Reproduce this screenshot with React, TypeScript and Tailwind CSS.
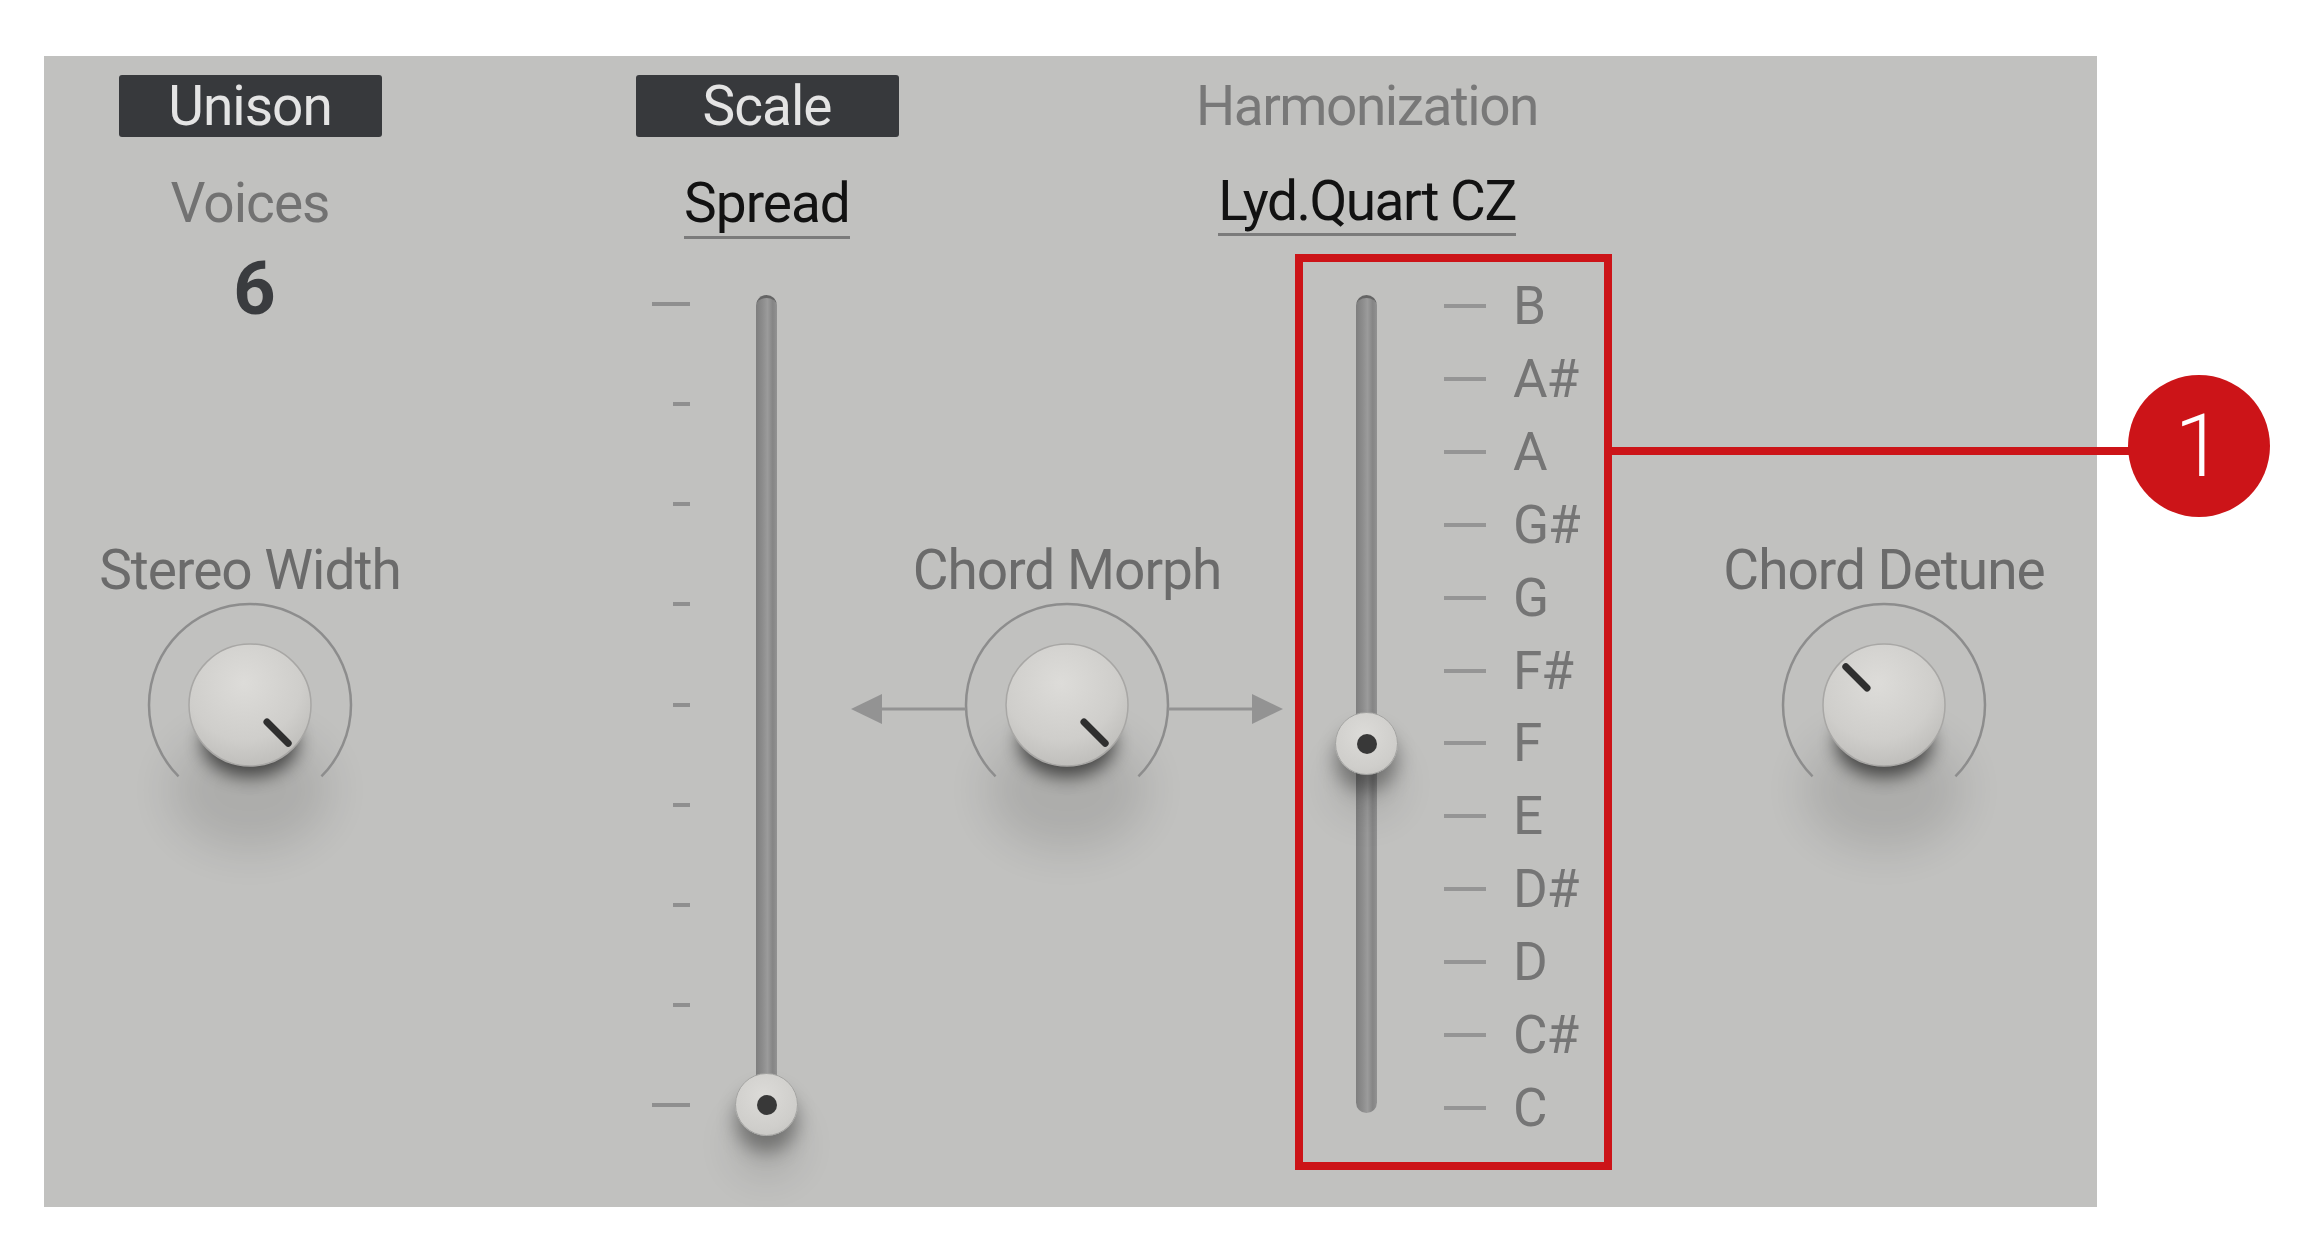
import React, { useId } from 'react';

const NOTES = ['B', 'A#', 'A', 'G#', 'G', 'F#', 'F', 'E', 'D#', 'D', 'C#', 'C'];
// long ticks only at the ends of the Spread scale
const SPREAD_TICKS = [true, false, false, false, false, false, false, false, true];

const Tab = ({ label }: { label: string }) => (
  <div className="flex h-[62px] w-[263px] items-center justify-center rounded-[3px] bg-[#37393c] text-[55px] leading-none tracking-[-1px] text-[#e4e4e4]">
    {label}
  </div>
);

const Label = ({ children, className = '' }: { children: React.ReactNode; className?: string }) => (
  <div className={`whitespace-nowrap text-[55px] leading-[60px] tracking-[-1px] text-[#6b6b6b] ${className}`}>
    {children}
  </div>
);

function Knob({ angle, arrows = false }: { angle: number; arrows?: boolean }) {
  const uid = useId().replace(/:/g, '');
  const w = arrows ? 440 : 220;
  const cx = w / 2;
  const cy = 105;
  const t = (angle * Math.PI) / 180;
  const pt = (r: number) => `${cx + r * Math.sin(t)} ${cy - r * Math.cos(t)}`;
  const a = 101 * Math.SQRT1_2;
  const ay = cy + 4;

  return (
    <svg width={w} height={210} viewBox={`0 0 ${w} 210`} className="shrink-0 overflow-visible">
      <defs>
        <radialGradient id={`body${uid}`} cx="45%" cy="32%" r="72%">
          <stop offset="0%" stopColor="#dddcd9" />
          <stop offset="65%" stopColor="#cfcecb" />
          <stop offset="100%" stopColor="#bdbcb9" />
        </radialGradient>
        <filter id={`near${uid}`} x="-100%" y="-100%" width="300%" height="300%">
          <feGaussianBlur stdDeviation="9" />
        </filter>
        <filter id={`far${uid}`} x="-100%" y="-100%" width="300%" height="300%">
          <feGaussianBlur stdDeviation="22" />
        </filter>
      </defs>

      <ellipse cx={cx} cy={cy + 85} rx={80} ry={60} fill="#000" opacity={0.1} filter={`url(#far${uid})`} />
      <ellipse cx={cx} cy={cy + 38} rx={48} ry={34} fill="#000" opacity={0.6} filter={`url(#near${uid})`} />

      <path
        d={`M ${cx - a} ${cy + a} A 101 101 0 1 1 ${cx + a} ${cy + a}`}
        fill="none"
        stroke="#8d8d8d"
        strokeWidth={2.5}
      />

      {arrows && (
        <g fill="#939393" stroke="#939393">
          <line x1={34} y1={ay} x2={cx - 101} y2={ay} strokeWidth={3} />
          <line x1={cx + 101} y1={ay} x2={w - 34} y2={ay} strokeWidth={3} />
          <polygon points={`4,${ay} 35,${ay - 15} 35,${ay + 15}`} stroke="none" />
          <polygon points={`${w - 4},${ay} ${w - 35},${ay - 15} ${w - 35},${ay + 15}`} stroke="none" />
        </g>
      )}

      <circle cx={cx} cy={cy} r={61} fill={`url(#body${uid})`} stroke="#a8a7a5" strokeWidth={1.5} />
      <path d={`M ${pt(24)} L ${pt(54)}`} stroke="#2f2f2f" strokeWidth={7} strokeLinecap="round" />
    </svg>
  );
}

const Track = ({ height, handleTop }: { height: string; handleTop: string }) => (
  <div
    className={`relative w-[21px] shrink-0 rounded-full border-t-[3px] border-[#656565] bg-[linear-gradient(90deg,#7e7e7e_0%,#8c8c8c_30%,#9b9b9b_55%,#858585_80%,#929292_100%)] ${height}`}
  >
    <div
      className={`absolute left-[-21px] flex h-[63px] w-[63px] items-center justify-center rounded-full border border-[#a3a3a1] bg-[radial-gradient(circle_at_45%_35%,#dcdbd8_0%,#cfcecb_65%,#c0bfbc_100%)] shadow-[0_16px_18px_rgba(0,0,0,0.35),0_40px_40px_rgba(0,0,0,0.12)] ${handleTop}`}
    >
      <div className="h-[20px] w-[20px] rounded-full bg-[#383838]" />
    </div>
  </div>
);

export default function App() {
  return (
    <div className="relative h-[1256px] w-[2306px] overflow-hidden bg-white pl-[44px] pt-[56px] [font-family:Roboto,'Noto_Sans',sans-serif]">
      <div className="flex h-[1151px] w-[2053px] items-start bg-[#c1c1bf] pt-[19px]">
        {/* Unison */}
        <div className="flex w-[412px] flex-col items-center">
          <Tab label="Unison" />
          <div className="mt-[36px] text-[55px] leading-[60px] tracking-[-1px] text-[#727272]">Voices</div>
          <div className="ml-[9px] mt-[18px] text-[74px] font-bold leading-[76px] text-[#3a3c3f]">6</div>
          <Label className="mt-[213px]">Stereo Width</Label>
          <Knob angle={135} />
        </div>

        {/* Scale / Spread */}
        <div className="ml-[179px] flex w-[264px] flex-col items-center">
          <Tab label="Scale" />
          <div className="mt-[36px] border-b-[3px] border-[#7b7b7b] pb-[3px] text-[55px] leading-[60px] tracking-[-1px] text-[#121212]">
            Spread
          </div>
          <div className="mt-[56px] flex self-stretch pl-[17px]">
            <div className="flex h-[812px] w-[38px] flex-col items-end justify-between pt-[7px]">
              {SPREAD_TICKS.map((long, i) => (
                <div key={i} className={`h-[4px] bg-[#8f8f8f] ${long ? 'w-[38px]' : 'w-[17px]'}`} />
              ))}
            </div>
            <div className="ml-[66px]">
              <Track height="h-[812px]" handleTop="top-[775px]" />
            </div>
          </div>
        </div>

        {/* Chord Morph */}
        <div className="ml-[38px] flex w-[260px] flex-col items-center">
          <Label className="mt-[465px]">Chord Morph</Label>
          <Knob angle={135} arrows />
        </div>

        {/* Harmonization */}
        <div className="flex w-[340px] flex-col items-center">
          <div className="flex h-[62px] items-center text-[55px] tracking-[-1.5px] text-[#787878]">Harmonization</div>
          <div className="mt-[34px] border-b-[3px] border-[#7b7b7b] pb-[2px] text-[55px] leading-[60px] tracking-[-1.5px] text-[#121212]">
            Lyd.Quart CZ
          </div>
          <div className="mt-[59px] flex self-stretch pl-[159px]">
            <Track height="h-[818px]" handleTop="top-[414px]" />
            <div className="ml-[67px] flex h-[824px] flex-col justify-between">
              {NOTES.map((n) => (
                <div key={n} className="flex h-[22px] items-center">
                  <div className="h-[4px] w-[42px] bg-[#959595]" />
                  <span className="ml-[27px] whitespace-nowrap text-[53px] leading-[22px] tracking-[-1px] text-[#757575]">{n}</span>
                </div>
              ))}
            </div>
          </div>
        </div>

        {/* Chord Detune */}
        <div className="ml-[187px] flex w-[320px] flex-col items-center">
          <Label className="mt-[465px]">Chord Detune</Label>
          <Knob angle={-45} />
        </div>
      </div>

      {/* callout */}
      <div className="absolute left-[1295px] top-[254px] h-[916px] w-[317px] border-[8px] border-[#cc1418]" />
      <div className="absolute left-[1612px] top-[447px] h-[8px] w-[520px] bg-[#cc1418]" />
      <div className="absolute left-[2128px] top-[375px] flex h-[142px] w-[142px] items-center justify-center rounded-full bg-[#cc1418] text-[88px] font-light leading-none text-white">
        1
      </div>
    </div>
  );
}
